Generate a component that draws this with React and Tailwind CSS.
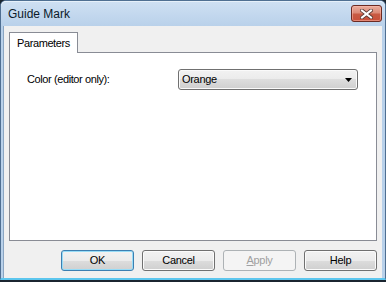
const ui = { fontFamily: '"Liberation Sans", Arial, sans-serif' };

function CloseButton() {
  return (
    <div className="w-[31px] h-[17px] rounded-[3px] border border-[#6b2a22] bg-[#cf6550] bg-[linear-gradient(to_bottom,#e9ad9e,#dc8a77_45%,#c85a43_55%,#c9503a)] shadow-[inset_0_0_0_1px_rgba(255,190,175,0.5)] flex items-center justify-center">
      <svg width="13" height="10" viewBox="0 0 13 10">
        <path d="M2 1.5 L11 8.5 M11 1.5 L2 8.5" stroke="#5a3a34" strokeWidth="3.8" strokeLinecap="square" />
        <path d="M2 1.5 L11 8.5 M11 1.5 L2 8.5" stroke="#ffffff" strokeWidth="2" strokeLinecap="square" />
      </svg>
    </div>
  );
}

function DialogButton({ label, isDefault, disabled }) {
  return (
    <button
      className={`w-[73px] h-[21px] rounded-[3px] border text-[11px] tracking-[-0.3px] flex items-center justify-center ${
        disabled
          ? 'border-[#adb2b5] bg-[#f4f4f4] text-[#a0a0a0]'
          : isDefault
            ? 'border-[#3c7fb1] bg-[linear-gradient(to_bottom,#f2f2f2,#ebebeb_50%,#dddddd_50%,#d0d0d0)] text-black shadow-[inset_0_0_0_1px_#97dcf7]'
            : 'border-[#707070] bg-[linear-gradient(to_bottom,#f2f2f2,#ebebeb_50%,#dddddd_50%,#cfcfcf)] text-black shadow-[inset_0_0_0_1px_#fbfbfb]'
      }`}
    >
      {label}
    </button>
  );
}

export default function App() {
  return (
    <div className="w-[386px] h-[282px] bg-[#1b2530] overflow-hidden" style={ui}>
      <div className="h-[280px] flex flex-col rounded-t-[6px] border-x border-t border-[#4f6f92] border-b-2 border-b-[#5cc6ee] bg-[#b9d1ea]">
        {/* title bar */}
        <div className="h-[25px] shrink-0 flex items-center justify-between pl-[7px] pr-[3px] rounded-t-[5px] bg-[linear-gradient(to_bottom,#cfe0f3,#b9d1ea)] shadow-[inset_0_1px_0_#e6f0fa]">
          <span className="text-[12px] text-[#0c1a2a] pt-[1px]">Guide Mark</span>
          <CloseButton />
        </div>

        {/* client */}
        <div className="flex-1 ml-[2px] mr-[3px] bg-[#f0f0f0] border-l border-[#8aa5c2] flex flex-col px-[5px] pt-[6px]">
          <div className="flex">
            <div className="relative z-10 -mb-px h-[21px] w-[69px] border border-b-0 border-[#898c95] bg-white pl-[7px] flex items-center text-[11px] tracking-[-0.4px] text-black">
              Parameters
            </div>
          </div>
          <div className="h-[189px] border border-[#898c95] bg-white pl-[17px] pt-[16px]">
            <div className="flex items-center h-[21px]">
              <span className="w-[151px] text-[11px] tracking-[-0.4px] text-black">Color (editor only):</span>
              <div className="w-[180px] h-[21px] rounded-[3px] border border-[#707070] bg-[linear-gradient(to_bottom,#f2f2f2,#ebebeb_50%,#dddddd_50%,#cfcfcf)] shadow-[inset_0_0_0_1px_#fafafa] flex items-center justify-between pl-[3px] pr-[5px]">
                <span className="text-[11px] tracking-[-0.3px] text-black">Orange</span>
                <svg width="7" height="4" viewBox="0 0 7 4">
                  <path d="M0 0 H7 L3.5 4 Z" fill="#000" />
                </svg>
              </div>
            </div>
          </div>
          <div className="flex justify-end gap-[8px] mt-[9px]">
            <DialogButton label="OK" isDefault />
            <DialogButton label="Cancel" />
            <DialogButton label={<span><span className="underline">A</span>pply</span>} disabled />
            <DialogButton label="Help" />
          </div>
        </div>
      </div>
    </div>
  );
}
